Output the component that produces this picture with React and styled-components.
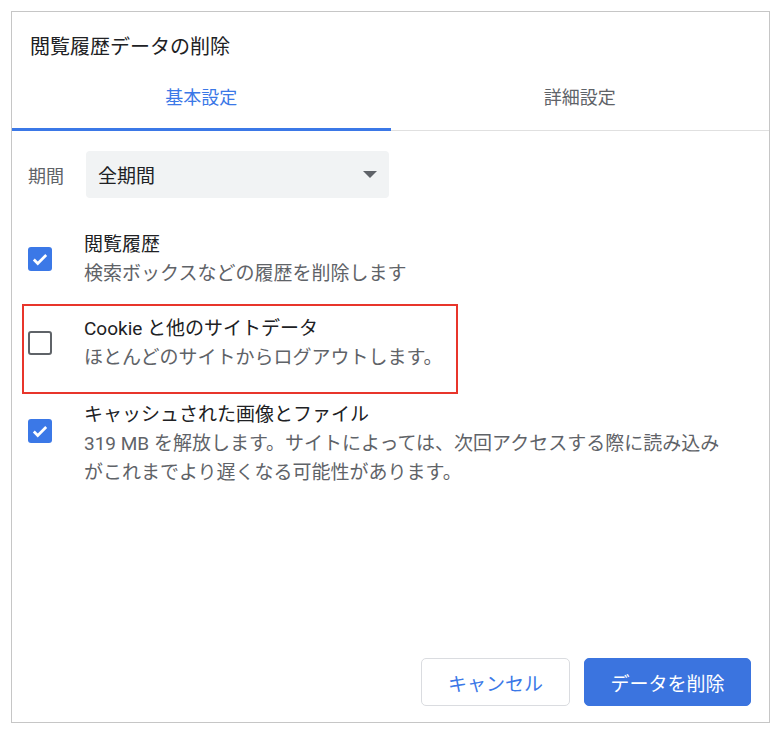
import React from 'react'
import styled, { createGlobalStyle } from 'styled-components'

const Global = createGlobalStyle`
  body { margin: 0; background: #fff; font-family: Roboto, "Noto Sans CJK JP", sans-serif; }
`

const Dialog = styled.div`
  margin: 11px 0 0 11px;
  width: 759px;
  height: 712px;
  border: 1px solid #c6c6c6;
  box-sizing: border-box;
  display: flex;
  flex-direction: column;
  background: #fff;
`

const Title = styled.div`
  font-size: 20px;
  color: #202124;
  padding: 19px 0 0 18px;
  height: 55px;
  box-sizing: border-box;
`

const Tabs = styled.div`
  display: flex;
  border-bottom: 1px solid #e0e0e0;
`

const Tab = styled.div`
  flex: 1;
  text-align: center;
  font-size: 18px;
  height: 64px;
  line-height: 62px;
  box-sizing: border-box;
  color: ${p => (p.active ? '#3b78e7' : '#5f6368')};
  border-bottom: 3px solid ${p => (p.active ? '#3b78e7' : 'transparent')};
  margin-bottom: -1px;
`

const Body = styled.div`
  flex: 1;
  padding: 20px 16px 0 16px;
`

const PeriodRow = styled.div`
  display: flex;
  align-items: center;
  gap: 22px;
  font-size: 18px;
  color: #5f6368;
`

const Select = styled.div`
  width: 303px;
  height: 47px;
  background: #f1f3f4;
  border-radius: 4px;
  display: flex;
  align-items: center;
  justify-content: space-between;
  padding: 0 12px 0 12px;
  box-sizing: border-box;
  color: #202124;
  font-size: 19px;
`

const Arrow = styled.span`
  width: 0; height: 0;
  border-left: 7px solid transparent;
  border-right: 7px solid transparent;
  border-top: 7px solid #5f6368;
`

const Item = styled.div`
  display: flex;
  align-items: ${p => (p.top ? 'flex-start' : 'center')};
  gap: 32px;
  margin: ${p => p.m};
  padding: ${p => (p.boxed ? '10px 0 10px 0' : '0')};
  position: relative;
`

const Highlight = styled.div`
  position: absolute;
  left: -6px; top: 0;
  width: 436px; height: 90px;
  border: 2px solid #e8352b;
  box-sizing: border-box;
`

const Box = styled.div`
  width: 24px; height: 24px;
  flex: none;
  box-sizing: border-box;
  border-radius: 3px;
  background: ${p => (p.checked ? '#3b78e7' : '#fff')};
  border: ${p => (p.checked ? 'none' : '2px solid #5f6368')};
  display: flex; align-items: center; justify-content: center;
  margin-top: ${p => p.mt || 0};
`

const Texts = styled.div`
  font-size: 19px;
  line-height: 29px;
`

const Main = styled.div` color: #202124; `
const Sub = styled.div` color: #5f6368; max-width: 652px; `

const Footer = styled.div`
  display: flex;
  justify-content: flex-end;
  gap: 14px;
  padding: 0 18px 16px 0;
`

const Button = styled.button`
  height: 48px;
  width: ${p => (p.primary ? 167 : 149)}px;
  border-radius: 5px;
  font-family: inherit;
  font-size: 19px;
  background: ${p => (p.primary ? '#3b74df' : '#fff')};
  color: ${p => (p.primary ? '#fff' : '#3b78e7')};
  border: 1px solid ${p => (p.primary ? '#3b74df' : '#dadce0')};
`

const Check = () => (
  <svg width="18" height="18" viewBox="0 0 16 16">
    <path d="M2.5 8.5l3.5 3.5 7.5-7.5" fill="none" stroke="#fff" strokeWidth="2.4" />
  </svg>
)

export default function App() {
  return (
    <>
      <Global />
      <Dialog>
        <Title>閲覧履歴データの削除</Title>
        <Tabs>
          <Tab active>基本設定</Tab>
          <Tab>詳細設定</Tab>
        </Tabs>
        <Body>
          <PeriodRow>
            期間
            <Select>全期間<Arrow /></Select>
          </PeriodRow>
          <Item m="32px 0 0 0">
            <Box checked><Check /></Box>
            <Texts>
              <Main>閲覧履歴</Main>
              <Sub>検索ボックスなどの履歴を削除します</Sub>
            </Texts>
          </Item>
          <Item m="16px 0 0 0" boxed>
            <Highlight />
            <Box />
            <Texts>
              <Main>Cookie と他のサイトデータ</Main>
              <Sub>ほとんどのサイトからログアウトします。</Sub>
            </Texts>
          </Item>
          <Item m="18px 0 0 0" top>
            <Box checked mt="19px"><Check /></Box>
            <Texts>
              <Main>キャッシュされた画像とファイル</Main>
              <Sub>319 MB を解放します。サイトによっては、次回アクセスする際に読み込みがこれまでより遅くなる可能性があります。</Sub>
            </Texts>
          </Item>
        </Body>
        <Footer>
          <Button>キャンセル</Button>
          <Button primary>データを削除</Button>
        </Footer>
      </Dialog>
    </>
  )
}
